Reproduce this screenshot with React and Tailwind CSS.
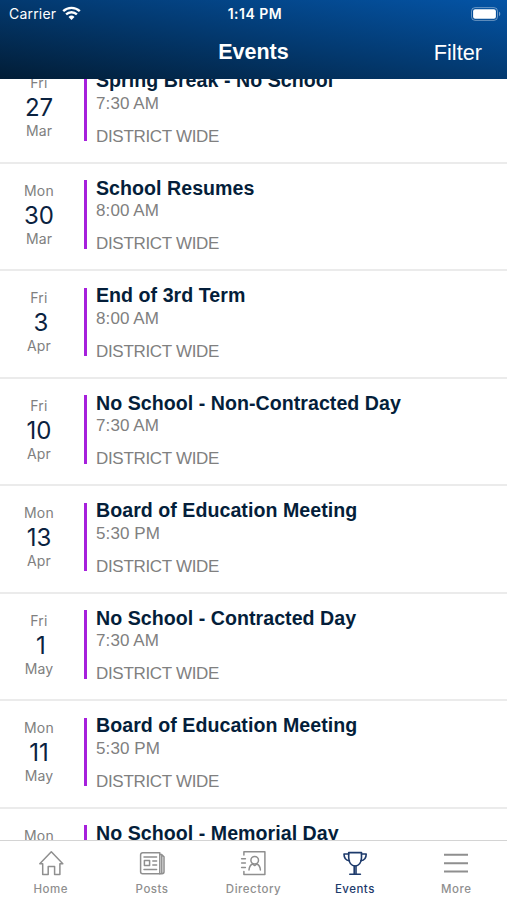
import React from 'react';

const events = [
    { id: 1, day: 'Fri', date: '27', month: 'Mar', title: 'Spring Break - No School', time: '7:30 AM' },
    { id: 2, day: 'Mon', date: '30', month: 'Mar', title: 'School Resumes', time: '8:00 AM' },
    { id: 3, day: 'Fri', date: '3', month: 'Apr', title: 'End of 3rd Term', time: '8:00 AM' },
    { id: 4, day: 'Fri', date: '10', month: 'Apr', title: 'No School - Non-Contracted Day', time: '7:30 AM' },
    { id: 5, day: 'Mon', date: '13', month: 'Apr', title: 'Board of Education Meeting', time: '5:30 PM' },
    { id: 6, day: 'Fri', date: '1', month: 'May', title: 'No School - Contracted Day', time: '7:30 AM' },
    { id: 7, day: 'Mon', date: '11', month: 'May', title: 'Board of Education Meeting', time: '5:30 PM' },
    { id: 8, day: 'Mon', date: '25', month: 'May', title: 'No School - Memorial Day', time: '7:30 AM' },
];

const iconProps = {
    width: 28,
    height: 28,
    viewBox: '0 0 28 28',
    fill: 'none',
    stroke: 'currentColor',
    strokeWidth: 1.5,
    strokeLinejoin: 'round',
    strokeLinecap: 'round',
};

const HomeIcon = () => (
    <svg {...iconProps}>
        <path d="M2.8 14.8 14.3 2.8l11.5 12h-2.9v10.8h-5.3v-8.2h-6.4v8.2H5.7V14.8z" />
    </svg>
);

const PostsIcon = () => (
    <svg {...iconProps}>
        <path d="M4.6 3.8h17.2v21H4.6a2 2 0 0 1-2-2v-17a2 2 0 0 1 2-2z" />
        <path d="M21.8 5.4h1.6l2.6 2.4v15a2 2 0 0 1-2 2h-2.2M23.8 6.4v17.8" />
        <path d="M6 8h12.6M14.8 12h3.8M14.8 16h3.8M6 20.6h12.6" />
        <path d="M6.4 11.4h5.2v5H6.4z" />
    </svg>
);

const DirectoryIcon = () => (
    <svg {...iconProps}>
        <path d="M4.9 6V2.8h21v22.8h-21v-3" />
        <path d="M2.6 9.8h3.8M2.6 14h3.8M2.6 18.4h3.8" />
        <circle cx="15.7" cy="11.2" r="3.8" />
        <path d="M10 21c.2-3.1 1.5-5 3.5-6l2.2 1.6 2.2-1.6c2 1 3.3 2.9 3.5 6" />
    </svg>
);

const TrophyIcon = () => (
    <svg {...iconProps} strokeWidth="1.6">
        <path d="M7.7 3.6h12.8v5c0 4.9-2.6 8.4-6.4 8.4s-6.4-3.5-6.4-8.4z" />
        <path d="M7.7 5H3c0 4 1.7 6.4 5.4 6.8M20.5 5h4.7c0 4-1.7 6.4-5.4 6.8" />
        <path d="M13.2 17v7.4M15 17v7.4M8.8 25.2h10.6" />
    </svg>
);

const MoreIcon = () => (
    <svg {...iconProps} strokeWidth="2" strokeLinecap="butt">
        <path d="M2 5.8h24M2 14.2h24M2 22.5h24" />
    </svg>
);

const tabs = [
    { name: 'Home', icon: HomeIcon },
    { name: 'Posts', icon: PostsIcon },
    { name: 'Directory', icon: DirectoryIcon },
    { name: 'Events', icon: TrophyIcon },
    { name: 'More', icon: MoreIcon },
];

const StatusBar = () => (
    <div className="grid grid-cols-3 items-center h-[27px] pl-[9px] pr-[6px] font-['Inter',sans-serif] text-[14px]">
        <div className="flex items-center gap-[6px]">
            <span className="tracking-[0.2px]">Carrier</span>
            <svg width="19" height="15" viewBox="0 0 19 15" fill="none" stroke="white" strokeWidth="2.4">
                <path d="M1.2 5.2a12 12 0 0 1 16.6 0M4.1 8.4a7.8 7.8 0 0 1 10.8 0" />
                <path d="M9.5 14 6.5 10.9a4.4 4.4 0 0 1 6 0z" fill="white" stroke="none" />
            </svg>
        </div>
        <div className="text-center font-semibold text-[14px] tracking-[0.5px] whitespace-nowrap">1:14 PM</div>
        <div className="flex justify-end">
            <svg width="30" height="14" viewBox="0 0 30 14">
                <rect x="0.5" y="0.6" width="26" height="12.8" rx="3.6" fill="none" stroke="white" strokeOpacity="0.4" />
                <rect x="2.1" y="2.2" width="22.8" height="9.6" rx="2" fill="white" />
                <path d="M28 4.8c1.7.6 1.7 3.8 0 4.4z" fill="white" fillOpacity="0.45" />
            </svg>
        </div>
    </div>
);

const EventRow = ({ event }) => (
    <li className="flex h-[107.5px] shrink-0 border-b-2 border-[#ebebeb] pt-[12px]">
        <div className="w-[78px] shrink-0 pt-[6.3px] text-center font-['Inter',sans-serif] text-[14px] leading-[18px] text-[#808080]">
            <div className="tracking-[0.3px]">{event.day}</div>
            <div className={`pt-[1px] text-[24px] leading-[29px] text-[#0a2240] ` + (event.date.length === 1 ? 'pl-[4px]' : '')}>
                {event.date}
            </div>
            <div className="tracking-[0.1px]">{event.month}</div>
        </div>
        <div className="ml-[6px] mt-[4.5px] h-[68.5px] w-[3px] shrink-0 bg-[#a620dc]" />
        <div className="ml-[9px] whitespace-nowrap text-[17px] leading-[20px] text-[#808080]">
            <div className="text-[19.6px] leading-[24px] font-bold tracking-[0.04px] text-[#041e3a]">{event.title}</div>
            <div className="mt-[1.5px] tracking-[0.1px]">{event.time}</div>
            <div className="mt-[13px] tracking-[-0.32px]">DISTRICT WIDE</div>
        </div>
    </li>
);

const App = () => {
    const activeTab = 'Events';

    return (
        <div className="flex flex-col h-[900px] w-[507px] overflow-hidden bg-white font-['Liberation_Sans',Arial,sans-serif]">
            <header className="h-[79px] shrink-0 bg-[linear-gradient(to_top_right,#021d36_0%,#03396f_50%,#0454a6_100%)] text-white">
                <StatusBar />
                <div className="grid grid-cols-3 items-center h-[51px]">
                    <h1 className="col-start-2 text-center text-[21.5px] font-bold">Events</h1>
                    <button className="justify-self-end pt-[2px] pr-[25px] text-[21.7px]">Filter</button>
                </div>
            </header>

            <main className="flex-1 min-h-0 overflow-hidden">
                <ul className="-mt-[23px] flex flex-col">
                    {events.map((event) => (
                        <EventRow key={event.id} event={event} />
                    ))}
                </ul>
            </main>

            <nav className="grid grid-cols-5 h-[60px] shrink-0 border-t border-[#d4d4d4] bg-white">
                {tabs.map(({ name, icon: Icon }) => (
                    <div
                        key={name}
                        className={
                            `flex flex-col items-center pt-[8px] font-['Inter',sans-serif] text-[11.5px] leading-[16px] font-medium tracking-[0.5px] ` +
                            (name === activeTab ? 'text-[#1d3a6b]' : 'text-[#8f8f8f]')
                        }
                    >
                        <Icon />
                        <span className="mt-[4px]">{name}</span>
                    </div>
                ))}
            </nav>
        </div>
    );
};

export default App;
